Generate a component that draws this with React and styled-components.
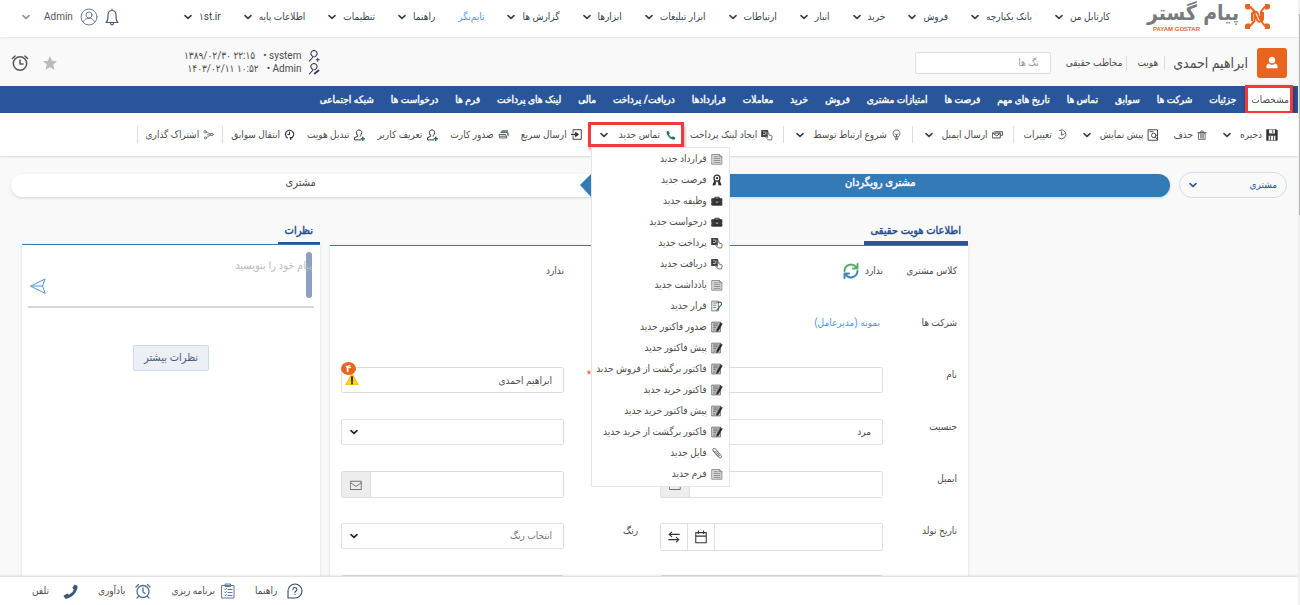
import React from "react";
import styled, { createGlobalStyle, css } from "styled-components";

const font = `Roboto, "DejaVu Sans Condensed", "DejaVu Sans", sans-serif`;
const c = {
  ink: "#4c4c4c",
  navy: "#29569b",
  blue: "#337ab7",
  link: "#4a9af0",
  orange: "#e8641f",
  red: "#f4383c",
  teal: "#1f6f6c",
  line: "#dedede",
  bg: "#f9f9f9",
  slate: "#4a5a7d",
};

const GlobalStyle = createGlobalStyle`
  * { box-sizing: border-box; }
  body { margin: 0; background: ${c.bg}; }
  button, input, select, textarea { font: inherit; color: inherit; }
`;

const Shell = styled.div`
  display: grid;
  grid-template-columns: 2px minmax(0, 1fr);
  height: 100vh;
  direction: rtl;
  font: 10px/16px ${font};
  color: ${c.ink};
`;
const Page = styled.div`
  display: flex;
  flex-direction: column;
  min-width: 0;
  height: 100vh;
  overflow: hidden;
`;
const ScrollTrack = styled.div`
  background: #f0f0f0;
  padding-top: 14px;
  &::before {
    content: "";
    display: block;
    width: 1px;
    height: 201px;
    background: #b5b5b5;
  }
`;

/* ---------- svg helpers ---------- */
const Svg = styled.svg`
  display: block;
  flex: none;
  width: ${(p) => p.$w || p.$size}px;
  height: ${(p) => p.$size}px;
`;
const G = ({ size = 12, w, box = "0 0 16 16", color = "#444", sw = 1.2, children }) => (
  <Svg $size={size} $w={w} viewBox={box} fill="none" stroke={color} strokeWidth={sw} strokeLinecap="round" strokeLinejoin="round" aria-hidden="true">
    {children}
  </Svg>
);
const Chevron = ({ color = "#3a3f45", size = 8 }) => (
  <G size={size} box="0 0 8 8" color={color} sw={1.6}><path d="M1 2.600 4 5.400 7 2.600" /></G>
);

const icons = {
  save: <G size={12} color="#333" sw={1}><path d="M1 1h13l1 1v13H1z" fill="#333" /><path d="M4 1v5h8V1M3.500 15V9h9v6" fill="#eee" stroke="none" /><path d="M9 2v3M6 9.500v5M10 9.500v5" stroke="#333" /></G>,
  trash: <G size={10}><path d="M3 5h10v10H3zM1.500 4h13M6 4V1.500h4V4M6 7v6M8 7v6M10 7v6" /></G>,
  preview: <G size={12} sw={1.3}><path d="M2 1h12v14H2zM4 3.500h4" /><circle cx="9" cy="8.500" r="3" /><path d="m11.200 10.700 2.500 3" /></G>,
  changes: <G size={11}><path d="M5 2a6.500 6.500 0 1 1-1 11M8 4v5l4-2" /></G>,
  mail: <G size={11} sw={1.4}><path d="M1 6h11v7H1zM1 6l6 4 5-4M13 4h2.500v5H13M4 4h8" /></G>,
  bulb: <G size={11}><path d="M5 11C1.500 7.500 3 1.500 8 1.500s6.500 6 3 9.500zM6 13.300h4M6.500 15h3M6 7l2 2 2-2M8 9v2" /></G>,
  pay: <G size={12} sw={1.1}><path d="M1 2h8v8H1z" fill="#333" stroke="#333" /><path d="M3 4h1.500M3 7.500h2M6.500 4v3" stroke="#fff" /><path d="M8.500 7.500V5.300q1-1 2 0V8l3.300.8q1.200.5 1 2l-.8 3.700H9.500L6.300 11q0-1.700 2.200 0z" fill="#fff" stroke="#555" /></G>,
  phone: <G size={10}><path d="M1 2.500 3.500 1 6 5 4.500 7q1.500 3 5 4.500L11 10l4 2.500-1.500 3C7 15.500.5 9 1 2.500z" fill={c.teal} stroke="none" /></G>,
  send: <G size={11} color="#333" sw={1.3}><path d="M3 5V1h12v14H3v-4" /><path d="M1 8h6" strokeWidth="2" /><path d="M7 5l4 3-4 3z" fill="#333" /></G>,
  card: <G size={11}><path d="M2 8h9l2 5H3zM4 5h9l2 5M6 2.500h8M3 10.500h9" /><path d="M5 4h9l1 4" stroke={c.teal} /></G>,
  user: <G size={12} color="#333" sw={1.3}><path d="M5 7C3.500 4 5 1.200 8 1.200S12.500 4 11 7c-.6 1.200-1.500 1.500-1.500 2.500M5 7c.7 1 1.500 1.500 1.500 2.500L2 11.500v3h8" /><path d="M13 11v4M11 13h4" stroke={c.teal} strokeWidth="2" /></G>,
  history: <G size={11} color="#333" sw={1.6}><path d="M5 13a6 6 0 1 1 5 .5M10 15.500l-1-3 3-.5M8 4.500V8H5.500" /></G>,
  share: <G size={11} color="#666"><circle cx="3" cy="4" r="1.800" /><circle cx="13" cy="8" r="1.800" /><circle cx="3.500" cy="13" r="1.600" /><path d="m5 4.800 6.300 2.500M5 12.300l6.300-3.500M6 8.500h5" /></G>,
  doc: <G size={12} color="#777" sw={1}><path d="M1.500 2h9.500l3.500 3v10h-13z" fill="#ddd" /><path d="M11 2v3h3.500M4 5h5M4 7.500h8M4 10h8M4 12.500h8" /></G>,
  medal: <G size={12} color="#333" sw={1.8}><circle cx="8" cy="5.500" r="4" /><circle cx="8" cy="5.500" r=".6" /><path d="M5 9.500 3 14.500l2.500-.5M11 9.500l2 5-2.500-.5M6 11l-1 3M10 11l1 3" /></G>,
  case: <G size={12} color="#333" sw={1.3}><path d="M5 5V3h6v2" /><path d="M1.500 5h13v4h-13zM1.500 10h13v3.500h-13z" fill="#333" /><path d="M7 9.500h2" stroke="#bbb" /></G>,
  appt: <G size={12} color="#666" sw={1}><path d="M1.500 1.500H10v13H1.500z" fill="#eee" /><path d="M3.500 4h4M3.500 7h3M3.500 10h3" /><path d="M9 3.500q5-2 5 2c0 2-3.500 3-3.500 5.500l-3 2.500" stroke={c.teal} strokeWidth="1.500" /></G>,
  edit: <G size={12} color="#333" sw={1}><path d="M1.500 1.500h11v13h-11z" fill="#d8d8d8" stroke="#555" /><path d="M3.500 4h6M3.500 6.500h5M3.500 9h3M3.500 12h2" /><path d="m13 2.500 2 1-5 9-2.500 1.500.5-3z" fill="#222" /></G>,
  clip: <G size={12} color="#666" sw={1.3}><path d="m3 5.500 7 8c2 2 5 .5 3.500-2L6.500 3C4.500.5 1 2.500 3 5l6.500 7c1.300 1 2.300 0 1.500-1L6 5.500" /></G>,
};

const TextButton = styled.button`
  display: flex;
  align-items: center;
  gap: ${(p) => p.$gap || 4}px;
  padding: 0;
  border: 0;
  background: none;
  white-space: nowrap;
  line-height: 16px;
  cursor: pointer;
`;

/* ---------- top navigation ---------- */
const TopBar = styled.header`
  display: flex;
  align-items: center;
  height: 37px;
  flex: none;
  padding: 0 28px 4px 22px;
  background: #fff;
  box-shadow: 0 1px 2px #00000018;
  z-index: 1;
`;
const Brand = styled.a`
  display: flex;
  gap: 6px;
  align-items: center;
  width: 124px;
  text-decoration: none;
`;
const BrandText = styled.span`
  display: flex;
  flex-direction: column;
  color: #777b7e;
  font: bold 21px/25px "DejaVu Sans Condensed", "DejaVu Sans", sans-serif;
  white-space: nowrap;
`;
const BrandLatin = styled.small`
  align-self: flex-end;
  padding-left: 6px;
  color: ${c.orange};
  font: bold 6px/7px "Liberation Sans", sans-serif;
`;
const Nav = styled.nav`
  display: flex;
  gap: 23px;
  margin-inline-start: 36px;
`;
const NavLink = styled.a`
  display: flex;
  align-items: center;
  gap: 7px;
  white-space: nowrap;
  text-decoration: none;
  color: ${(p) => (p.$accent ? c.link : "#34434f")};
`;
const Account = styled.div`
  display: flex;
  align-items: center;
  gap: 7px;
  margin-inline-start: auto;
  color: #555;
`;

const navItems = ["کارتابل من", "بانک یکپارچه", "فروش", "خرید", "انبار", "ارتباطات", "ابزار تبلیغات", "ابزارها", "گزارش ها", "تایم‌نگر", "راهنما", "تنظیمات", "اطلاعات پایه", "۱st.ir"];

const Logo = () => (
  <Svg $size={25} viewBox="0 0 25 25" fill="none" stroke={c.orange} strokeWidth="2" strokeLinejoin="round" aria-hidden="true">
    <path d="M2.500 3h3l4 4.500v9.500l-4.500 5H2.500M22.500 3h-3l-3.500 4.500v9.500l4 5h2.500M7 8.500q2 0 3 2.500l2.500 5.500q1.500 2 4 .5M9.500 7.500q2.500 0 3.500 2.500l1.500 4q1 2.500 3.500 2.500M7 17V8.500M18 16.500V8" />
    <path d="M0 1.500Q0 0 1.500 0H5v5.500H2Q0 5 0 3zM25 1.500Q25 0 23.500 0H20v5.500h3Q25 5 25 3zM0 22q0-2.500 2-2.500h3V25H1.500Q0 25 0 23.500zM25 22q0-2.500-2-2.500h-3V25h3.500Q25 25 25 23.500z" fill={c.orange} stroke="none" />
  </Svg>
);

const TopNavigation = () => (
  <TopBar>
    <Brand href="#home">
      <Logo />
      <BrandText>پیام گستر<BrandLatin dir="ltr">PAYAM GOSTAR</BrandLatin></BrandText>
    </Brand>
    <Nav>
      {navItems.map((t) => (
        <NavLink key={t} href="#nav" $accent={t === "تایم‌نگر"}>
          <span dir={t === "۱st.ir" ? "ltr" : undefined}>{t}</span>
          {t !== "تایم‌نگر" && <Chevron />}
        </NavLink>
      ))}
    </Nav>
    <Account>
      <G size={18} w={14} box="0 0 14 18" color={c.slate} sw={1.2}><path d="M1 14.500c2-1.500 2-3 2-7 0-3 1.500-5 4-5s4 2 4 5c0 4 0 5.500 2 7zM5.500 15c0 2.500 3 2.500 3 0M7 2.500V1" /></G>
      <G size={18} box="0 0 18 18" color="#6b7a99" sw={1}><circle cx="9" cy="9" r="8" /><circle cx="9" cy="7" r="3" /><path d="M3.500 14.500C4 11 6.500 10.500 9 10.500s5 .5 5.500 4" /></G>
      <TextButton $gap={14}>Admin<Chevron color="#8a94a5" /></TextButton>
    </Account>
  </TopBar>
);

/* ---------- record header ---------- */
const RecordBar = styled.section`
  display: flex;
  align-items: center;
  height: 49px;
  flex: none;
  padding: 2px 11px 0;
`;
const Avatar = styled.span`
  display: grid;
  place-items: center;
  width: 30px;
  height: 30px;
  border-radius: 3px;
  background: ${c.orange};
`;
const RecordName = styled.h1`
  margin: 0 9px 0 8px;
  font-size: 14px;
  font-weight: 400;
  line-height: 20px;
  white-space: nowrap;
`;
const Tag = styled.span`
  padding: 0 6px 0 10px;
  border-inline-start: 1px solid ${c.line};
  line-height: 14px;
  white-space: nowrap;
`;
const LastTag = styled(Tag)`
  padding: 0 4px 0 0;
`;
const TagInput = styled.input`
  width: 136px;
  height: 22px;
  margin-inline-start: 15px;
  padding: 0 11px;
  border: 1px solid ${c.line};
  border-radius: 2px;
  background: #fff;
  &::placeholder { color: #999; opacity: 1; }
`;
const Audit = styled.dl`
  margin: 0 auto 0 127px;
`;
const AuditRow = styled.div`
  display: flex;
  align-items: center;
  gap: 8px;
  height: 13px;
  dt { display: flex; align-items: center; gap: 7px; }
  dd { margin: 0; }
`;
const RecordActions = styled.div`
  display: flex;
  align-items: center;
  gap: 14px;
`;

const RecordHeader = () => (
  <RecordBar>
    <Avatar>
      <G size={14}><path d="M8 1a3.500 3.700 0 0 1 3.200 5.500C10 9 6 9 4.800 6.500A3.500 3.700 0 0 1 8 1zM4.500 8.500c2 2 5 2 7 0C14 9 14.500 11 14.500 13q0 1-1 1h-11q-1 0-1-1c0-2 .5-4 3-4.500z" fill="#fff" stroke="none" /></G>
    </Avatar>
    <RecordName>ابراهیم احمدی</RecordName>
    <Tag>هویت</Tag>
    <LastTag>مخاطب حقیقی</LastTag>
    <TagInput aria-label="تگ ها" placeholder="تگ ها" />
    <Audit>
      <AuditRow>
        <dt><G size={12} color="#333a5a" sw={1.4}><path d="M5 7.500a4 4 0 1 1 6 0L9 9M5 7.500 7 9 2 14.500M11 13h4M13 11v4" /></G>system •</dt>
        <dd dir="ltr">۱۳۸۹/۰۲/۳۰ ۲۲:۱۵</dd>
      </AuditRow>
      <AuditRow>
        <dt><G size={12} color="#333a5a" sw={1.4}><path d="M5 7.500a4 4 0 1 1 6 0L9 9M5 7.500 7 9 2 14.500" /><path d="m9 14 5-4" strokeWidth="2.500" /></G>Admin •</dt>
        <dd dir="ltr">۱۴۰۳/۰۲/۱۱ ۱۰:۵۲</dd>
      </AuditRow>
    </Audit>
    <RecordActions>
      <TextButton aria-label="نشان کردن"><G size={14} box="0 0 14 14"><path d="m7 0 2 4.800 5 .4-3.800 3.300L11.400 14 7 11l-4.400 3 1.200-5.500L0 5.200l5-.4z" fill="#bbb" stroke="none" /></G></TextButton>
      <TextButton aria-label="یادآوری"><G size={18} box="0 0 18 18" color="#555" sw={1.5}><circle cx="9" cy="9.500" r="6.700" /><path d="M9 6v4h3M1.500 4.500 4 2M14 2l2.500 2.500" /></G></TextButton>
    </RecordActions>
  </RecordBar>
);

/* ---------- tabs ---------- */
const TabStrip = styled.nav`
  display: flex;
  gap: 17px;
  height: 27px;
  flex: none;
  padding: 0 6px;
  background: ${c.navy};
`;
const Tab = styled.a`
  display: flex;
  align-items: center;
  color: #fff;
  -webkit-text-stroke: 0.4px #fff;
  text-decoration: none;
  white-space: nowrap;
  ${(p) => p.$active && css`
    margin-inline-end: -7px;
    padding: 0 3px 0 5px;
    background: #fff;
    color: ${c.ink};
    -webkit-text-stroke: 0;
    outline: 3px solid ${c.red};
    outline-offset: -2px;
    filter: drop-shadow(1px 2px 2px #0006);
  `}
`;
const tabs = ["مشخصات", "جزئیات", "شرکت ها", "سوابق", "تماس ها", "تاریخ های مهم", "فرصت ها", "امتیازات مشتری", "فروش", "خرید", "معاملات", "قراردادها", "دریافت/ پرداخت", "مالی", "لینک های پرداخت", "فرم ها", "درخواست ها", "شبکه اجتماعی"];

/* ---------- toolbar ---------- */
const Bar = styled.div`
  display: flex;
  align-items: center;
  gap: 6px;
  height: 43px;
  flex: none;
  padding: 0 20px;
  background: #fff;
  box-shadow: 0 1px 2px #00000020;
  position: relative;
  z-index: 2;
`;
const ToolGroup = styled.div`
  display: flex;
  align-items: center;
  gap: ${(p) => p.$gap}px;
`;
const Divider = styled.span`
  width: 1px;
  height: 17px;
  margin: 0 -4px;
  background: ${c.line};
`;
const ToolButton = styled(TextButton)`
  margin-inline-end: ${(p) => (p.$menu ? 2 : 0)}px;
`;
const MenuAnchor = styled.div`
  position: relative;
`;
const HighlightedButton = styled(TextButton)`
  height: 25px;
  padding: 0 5px 0 9px;
  border: 3px solid ${c.red};
  box-shadow: 1px 3px 3px #0005;
`;
const Menu = styled.ul`
  position: absolute;
  top: 25px;
  left: 3px;
  width: 139px;
  margin: 0;
  padding: 0 0 2px;
  list-style: none;
  background: #fff;
  border: 1px solid #e6e6e6;
`;
const MenuButton = styled(TextButton)`
  width: 100%;
  height: 21px;
  padding: 0 6px;
`;
const leadTools = [
  ["save", "ذخیره", true], ["trash", "حذف"], ["preview", "پیش نمایش", true], ["changes", "تغییرات"], null,
  ["mail", "ارسال ایمیل", true], null, ["bulb", "شروع ارتباط توسط", true], null, ["pay", "ایجاد لینک پرداخت"],
];
const tailTools = [
  ["send", "ارسال سریع"], ["card", "صدور کارت"], ["user", "تعریف کاربر"], ["user", "تبدیل هویت"],
  ["history", "انتقال سوابق"], null, ["share", "اشتراک گذاری"], null,
];
const menuItems = [
  ["doc", "قرارداد جدید"], ["medal", "فرصت جدید"], ["case", "وظیفه جدید"], ["case", "درخواست جدید"],
  ["pay", "پرداخت جدید"], ["pay", "دریافت جدید"], ["doc", "یادداشت جدید"], ["appt", "قرار جدید"],
  ["edit", "صدور فاکتور جدید"], ["edit", "پیش فاکتور جدید"], ["edit", "فاکتور برگشت از فروش جدید"],
  ["edit", "فاکتور خرید جدید"], ["edit", "پیش فاکتور خرید جدید"], ["edit", "فاکتور برگشت از خرید جدید"],
  ["clip", "فایل جدید"], ["doc", "فرم جدید"],
];
const ToolLabel = styled.span`
  margin-inline-end: ${(p) => (p.$menu ? 5 : 0)}px;
`;
const ToolList = ({ items, gap }) => (
  <ToolGroup $gap={gap}>
    {items.map((t, i) => t ? (
      <ToolButton key={i} $menu={t[2]}>
        {icons[t[0]]}<ToolLabel $menu={t[2]}>{t[1]}</ToolLabel>{t[2] && <Chevron />}
      </ToolButton>
    ) : <Divider key={i} />)}
  </ToolGroup>
);

const Toolbar = () => (
  <Bar>
    <ToolList items={leadTools} gap={14} />
    <MenuAnchor>
      <HighlightedButton $gap={6} aria-expanded="true">
        {icons.phone}<ToolLabel $menu>تماس جدید</ToolLabel><Chevron />
      </HighlightedButton>
      <Menu>
        {menuItems.map(([ic, text]) => <li key={text}><MenuButton>{icons[ic]}{text}</MenuButton></li>)}
      </Menu>
    </MenuAnchor>
    <ToolList items={tailTools} gap={12} />
  </Bar>
);

/* ---------- stage bar ---------- */
const StageRow = styled.div`
  display: flex;
  align-items: center;
  gap: 9px;
  padding: 16px 11px 0;
`;
const SelectWrap = styled.span`
  display: grid;
  grid-template-columns: minmax(0, 1fr);
  align-items: center;
  > * { grid-area: 1 / 1; }
  > svg { justify-self: end; margin-inline-end: ${(p) => p.$inset || 9}px; pointer-events: none; }
`;
const StageSelect = styled.select`
  appearance: none;
  width: 108px;
  height: 26px;
  padding: 0 9px;
  border: 1px solid #d3dbe7;
  border-radius: 13px;
  background: transparent;
  color: ${c.navy};
`;
const Stages = styled.ol`
  display: grid;
  grid-template-columns: 1fr 1fr;
  flex: 1;
  height: 23px;
  margin: 0;
  padding: 0;
  list-style: none;
  border-radius: 12px;
  background: #fff;
  box-shadow: 0 1px 3px #00000026;
`;
const Stage = styled.li`
  position: relative;
  text-align: center;
  font-size: 11px;
  line-height: 18px;
  ${(p) => p.$current && css`
    background: ${c.blue};
    color: #fff;
    -webkit-text-stroke: 0.4px #fff;
    border-radius: 0 12px 12px 0;
    &::after {
      content: "";
      position: absolute;
      top: 0;
      right: 100%;
      border: solid transparent;
      border-width: 11px 11px 12px 0;
      border-right-color: ${c.blue};
    }
  `}
`;

/* ---------- panels ---------- */
const Main = styled.main`
  flex: 1;
  min-height: 0;
  overflow: hidden;
`;
const Columns = styled.div`
  display: grid;
  grid-template-columns: 319fr 638fr 298fr;
  gap: 10px;
  padding: 22px 1px 0 22px;
`;
const Panel = styled.section`
  display: flex;
  flex-direction: column;
  min-height: 420px;
`;
const PanelTitle = styled.h2`
  align-self: flex-start;
  margin: 0;
  padding: 3px 7px ${(p) => (p.$thick ? 2 : 3)}px;
  border-bottom: ${(p) => (p.$thick ? 4 : 2)}px solid ${c.navy};
  color: #204a8c;
  font-size: 11px;
  font-weight: 400;
  -webkit-text-stroke: 0.4px #204a8c;
  line-height: 16px;
`;
const PanelBody = styled.div`
  flex: 1;
  border-top: 1px solid ${c.blue};
  background: #fff;
  box-shadow: 0 1px 3px #00000020;
`;
const FormGrid = styled.div`
  display: grid;
  grid-template-columns: 1fr 1fr;
  grid-auto-rows: 52px;
  padding-top: 17px;
`;
const Cell = styled.div`
  display: grid;
  grid-template-columns: 74px minmax(0, 1fr);
  align-items: start;
  padding: 0 11px;
`;
const Label = styled.label`
  line-height: 16px;
`;
const RequiredLabel = styled(Label)`
  padding-inline-start: 47px;
  color: #e0512f;
`;
const Plain = styled.div`
  display: flex;
  gap: 6px;
  height: 16px;
  align-items: center;
`;
const CompanyLink = styled.a`
  padding-inline-start: 3px;
  color: ${c.link};
  text-decoration: none;
`;
const fieldBox = css`
  width: 100%;
  height: 26px;
  padding: 0 11px;
  border: 1px solid ${c.line};
  border-radius: 2px;
  background: #fff;
`;
const Field = styled.input`${fieldBox}`;
const Select = styled.select`
  ${fieldBox}
  appearance: none;
  color: ${(p) => (p.$muted ? "#777" : "inherit")};
`;
const Group = styled.div`
  display: flex;
  height: ${(p) => p.$h || 27}px;
  border: 1px solid ${c.line};
  border-radius: 2px;
`;
const GroupInput = styled.input`
  flex: 1;
  min-width: 0;
  padding: 0 11px;
  border: 0;
  background: ${(p) => (p.disabled ? "#eee" : "#fff")};
`;
const Addon = styled.button`
  display: grid;
  place-items: center;
  width: ${(p) => (p.$grey ? 29 : 27)}px;
  padding: 0;
  border: 0;
  border-inline-start: 1px solid ${c.line};
  background: ${(p) => (p.$grey ? "#ededed" : "#fff")};
`;
const WarnWrap = styled.div`
  position: relative;
`;
const Warning = styled.span`
  position: absolute;
  left: 4px;
  top: 5px;
`;
const Count = styled.span`
  position: absolute;
  left: 0;
  top: -5px;
  display: grid;
  place-items: center;
  width: 15px;
  height: 13px;
  border-radius: 50%;
  background: ${c.orange};
  color: #fff;
  font-weight: 700;
  line-height: 12px;
`;

const DropDown = ({ id, value, muted, label }) => (
  <SelectWrap>
    <Select id={id} aria-label={label} $muted={muted} defaultValue={value}><option>{value}</option></Select>
    <Chevron color="#222" />
  </SelectWrap>
);
const EmailField = ({ id, label }) => (
  <Group>
    <GroupInput id={id} aria-label={label} type="email" />
    <Addon $grey aria-label="ارسال ایمیل"><G size={12} color="#666"><path d="M1 3h14v11H1zM1 5l7 5 7-5" /></G></Addon>
  </Group>
);

const IdentityPanel = () => (
  <Panel>
    <PanelTitle $thick>اطلاعات هویت حقیقی</PanelTitle>
    <PanelBody>
      <FormGrid>
        <Cell>
          <Label as="span">کلاس مشتری</Label>
          <Plain>
            ندارد
            <TextButton aria-label="تازه سازی">
              <G size={16} sw={2}><path d="M1.500 8A6.500 6.500 0 0 1 13 4M14.500 1v4.500H10" stroke="#5cab6b" /><path d="M14.500 8A6.500 6.500 0 0 1 3 12M1.500 15v-4.500H6" stroke="#4386b5" /></G>
            </TextButton>
          </Plain>
        </Cell>
        <Cell><span /><Plain>ندارد</Plain></Cell>
        <Cell><Label as="span">شرکت ها</Label><CompanyLink href="#company">نمونه (مدیرعامل)</CompanyLink></Cell>
        <Cell />
        <Cell><Label htmlFor="first">نام</Label><Field id="first" /></Cell>
        <Cell>
          <RequiredLabel htmlFor="last">*</RequiredLabel>
          <WarnWrap>
            <Field id="last" aria-label="نام خانوادگی" defaultValue="ابراهیم احمدی" />
            <Warning><G size={14} box="0 0 14 14"><path d="M7 1.500 13 12.500H1z" fill="#ffd21c" stroke="#ffc400" /><path d="M7 5v4M7 11v.5" stroke="#333" strokeWidth="2" /></G></Warning>
            <Count>۴</Count>
          </WarnWrap>
        </Cell>
        <Cell><Label htmlFor="gender">جنسیت</Label><DropDown id="gender" value="مرد" /></Cell>
        <Cell><span /><DropDown id="title" label="عنوان" value="" /></Cell>
        <Cell><Label htmlFor="mail1">ایمیل</Label><EmailField id="mail1" label="ایمیل" /></Cell>
        <Cell><span /><EmailField id="mail2" label="ایمیل دوم" /></Cell>
        <Cell>
          <Label htmlFor="birth">تاریخ تولد</Label>
          <Group $h={28}>
            <GroupInput id="birth" />
            <Addon aria-label="تقویم"><G size={14} color="#333"><path d="M2 3h12v11.500H2zM2 7h12M5 1v3M11 1v3" /></G></Addon>
            <Addon aria-label="تعویض تقویم"><G size={12} color="#333" sw={1.5}><path d="M15 4.500H2M5 1.500l-3.500 3 3.500 3M1 11.500h13M11 8.500l3.500 3-3.500 3" /></G></Addon>
          </Group>
        </Cell>
        <Cell><Label htmlFor="color">رنگ</Label><DropDown id="color" value="انتخاب رنگ" muted /></Cell>
        <Cell>
          <span />
          <Group><GroupInput disabled aria-label="تاریخ" /><Addon aria-label="تقویم" /><Addon aria-label="تعویض" /></Group>
        </Cell>
        <Cell><span /><Field aria-label="توضیحات" /></Cell>
      </FormGrid>
    </PanelBody>
  </Panel>
);

const Compose = styled.div`
  display: flex;
  height: 56px;
  margin: 7px 6px 0;
  border-bottom: 2px solid #d5d5d5;
  position: relative;
`;
const Message = styled.textarea`
  flex: 1;
  padding: 6px 2px;
  border: 0;
  resize: none;
  background: none;
  font-size: 11px;
  position: relative;
  &::placeholder { color: #bdbdbd; opacity: 1; }
`;
const Thumb = styled.span`
  position: absolute;
  right: 2px;
  top: 0;
  width: 6px;
  height: 46px;
  border-radius: 3px;
  background: #8b9fc2;
`;
const SendButton = styled(TextButton)`
  padding: 14px 0 0 2px;
`;
const MoreButton = styled.button`
  display: block;
  margin: 37px auto 0;
  padding: 0 10px;
  height: 26px;
  border: 1px solid #d0dbe7;
  border-radius: 2px;
  background: #ebf0f7;
  color: #4d5b7a;
  font-size: 11px;
`;
const CommentsPanel = () => (
  <Panel>
    <PanelTitle>نظرات</PanelTitle>
    <PanelBody>
      <Compose>
        <Thumb />
        <Message aria-label="پیام" placeholder="پیام خود را بنویسید" />
        <SendButton aria-label="ارسال"><G size={16} color="#4a94d8" sw={1}><path d="M1 8 15 1l-2.500 7L15 15zM1 8h11.500" /></G></SendButton>
      </Compose>
      <MoreButton>نظرات بیشتر</MoreButton>
    </PanelBody>
  </Panel>
);

/* ---------- footer ---------- */
const Footer = styled.footer`
  display: flex;
  justify-content: flex-end;
  gap: 20px;
  flex: none;
  height: 29px;
  padding-left: 32px;
  background: #fff;
  border-top: 1px solid #e2e2e2;
  box-shadow: 0 -1px 2px #00000012;
  z-index: 1;
`;
const FooterItems = () => (
  <Footer>
    <TextButton $gap={10}><G size={16} color="#2f4a6b" sw={1.1}><path d="M1 15V8a7 7 0 1 1 7 7zM6 6.500c0-3 4-2.500 4 0C10 8 8 8 8 9.500M8 11.300v.3" /></G>راهنما</TextButton>
    <TextButton $gap={6}><G size={16} w={14} box="0 0 14 16" color="#5f7896" sw={1}><path d="M1 2.500h12V15H1zM4.500 1h5v2.500h-5zM3.500 6l.7.7L5.500 5.500M7 6.500h4M3.500 9l.7.7L5.500 8.500M7 9.500h4M3.500 12l.7.7 1.300-1.200M7 12.500h4" /></G>برنامه ریزی</TextButton>
    <TextButton $gap={10}><G size={16} color="#566d8c" sw={1.3}><circle cx="8" cy="8.500" r="6" /><path d="M8 5v4l2 1.500M1 4l2.500-2.500M15 4l-2.500-2.500M3.500 13.500 2 15M12.500 13.500 14 15" /></G>یادآوری</TextButton>
    <TextButton $gap={14}><G size={15}><path d="M12.500.5 15.500 2C16 8 9 15.500 2.500 15.800L.5 12.500l4-2.500 2 1.500Q10.500 9 11.500 6L10 4z" fill="#3f5778" stroke="none" /></G>تلفن</TextButton>
  </Footer>
);

export default function App() {
  return (
    <Shell>
      <GlobalStyle />
      <ScrollTrack />
      <Page>
        <TopNavigation />
        <RecordHeader />
        <TabStrip>{tabs.map((t, i) => <Tab key={t} href="#tab" $active={i === 0}>{t}</Tab>)}</TabStrip>
        <Toolbar />
        <Main>
          <StageRow>
            <SelectWrap $inset={10}>
              <StageSelect aria-label="مرحله"><option>مشتری</option></StageSelect>
              <Chevron color={c.navy} />
            </SelectWrap>
            <Stages><Stage $current>مشتری رویگردان</Stage><Stage>مشتری</Stage></Stages>
          </StageRow>
          <Columns>
            <span />
            <IdentityPanel />
            <CommentsPanel />
          </Columns>
        </Main>
        <FooterItems />
      </Page>
    </Shell>
  );
}
